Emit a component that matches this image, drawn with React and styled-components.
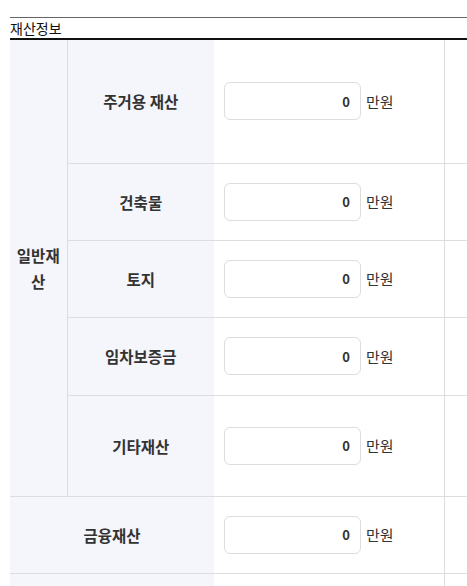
import styled, { createGlobalStyle } from "styled-components";

const GlobalStyle = createGlobalStyle`
  body {
    margin: 0;
    background: #fff;
    font-family: "Noto Sans CJK KR", "Noto Sans", sans-serif;
    color: #333;
    overflow: hidden;
  }
`;

const Section = styled.section`
  padding: 17px 0 0 10px;
  overflow: hidden;
`;

const Title = styled.h3`
  margin: 0;
  border-top: 1px solid #666;
  border-bottom: 2px solid #111;
  font-size: 14px;
  font-weight: 400;
  line-height: 20px;
  color: #111;
  width: 600px;
`;

const Table = styled.table`
  border-collapse: collapse;
  table-layout: fixed;
  width: 560px;
`;

const Row = styled.tr`
  height: ${(p) => p.$h}px;
`;

const Head = styled.th`
  background: #f5f6fb;
  font-size: 15.5px;
  font-weight: 700;
  color: #333;
  text-align: center;
  vertical-align: middle;
  line-height: 26px;
  padding: 0;
  border-bottom: 1px solid #ddd;
  border-right: ${(p) => (p.$divider ? "1px solid #ddd" : "none")};
`;

const Cell = styled.td`
  padding: 0 0 0 10px;
  border-bottom: 1px solid #ddd;
  border-right: 1px solid #ddd;
  vertical-align: middle;
`;

const Blank = styled.td`
  border-bottom: 1px solid #ddd;
`;

const Field = styled.div`
  display: flex;
  align-items: center;
  gap: 5px;
`;

const Amount = styled.input`
  box-sizing: border-box;
  width: 137px;
  height: 38px;
  border: 1px solid #ddd;
  border-radius: 6px;
  padding: 0 10px;
  text-align: right;
  font-family: inherit;
  font-size: 13px;
  font-weight: 700;
  color: #333;
  outline: none;
`;

const Unit = styled.span`
  font-size: 15px;
  color: #333;
`;

const Money = () => (
  <Field>
    <Amount defaultValue="0" />
    <Unit>만원</Unit>
  </Field>
);

const general = [
  ["주거용 재산", 123],
  ["건축물", 77],
  ["토지", 77],
  ["임차보증금", 78],
  ["기타재산", 101],
];

export default function App() {
  return (
    <Section>
      <GlobalStyle />
      <Title>재산정보</Title>
      <Table>
        <colgroup>
          <col style={{ width: 57 }} />
          <col style={{ width: 147 }} />
          <col style={{ width: 230 }} />
          <col style={{ width: 126 }} />
        </colgroup>
        <tbody>
          {general.map(([label, h], i) => (
            <Row key={label} $h={h}>
              {i === 0 && (
                <Head rowSpan={general.length} $divider>
                  일반재
                  <br />산
                </Head>
              )}
              <Head>{label}</Head>
              <Cell>
                <Money />
              </Cell>
              <Blank />
            </Row>
          ))}
          <Row $h={77}>
            <Head colSpan={2}>금융재산</Head>
            <Cell>
              <Money />
            </Cell>
            <Blank />
          </Row>
          <Row $h={20}>
            <Head colSpan={2} />
            <Cell />
            <Blank />
          </Row>
        </tbody>
      </Table>
    </Section>
  );
}
